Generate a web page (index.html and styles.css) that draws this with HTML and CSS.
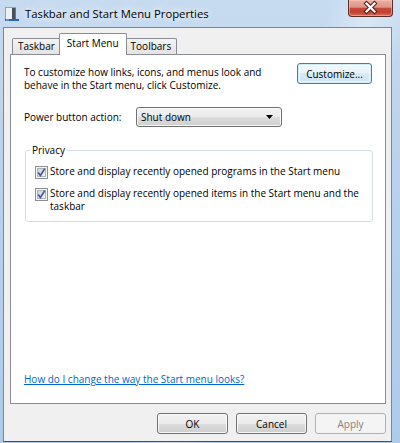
FILE: index.html
```html
<!DOCTYPE html>
<html>
<head>
<meta charset="utf-8">
<link rel="stylesheet" href="styles.css">
</head>
<body>
<div class="window">
  <div class="titlebar">
    <svg class="app-icon" width="14" height="15" viewBox="0 0 14 15">
      <rect x="0.5" y="0.5" width="10" height="12" fill="#eef0f2" stroke="#9aa0a8"/>
      <rect x="7" y="1" width="3.5" height="11.5" fill="#4a5058"/>
      <rect x="0" y="12" width="14" height="2" fill="#2d62b0"/>
      <rect x="1" y="12.5" width="3" height="1" fill="#8fc0f0"/>
    </svg>
    <span class="title">Taskbar and Start Menu Properties</span>
    <div class="close">
      <svg width="43" height="16" viewBox="0 0 43 16">
        <path d="M17.5 3.5 L25.5 11.5 M25.5 3.5 L17.5 11.5" stroke="#4a1f1a" stroke-width="4.2" stroke-linecap="square" fill="none"/>
        <path d="M17.5 3.5 L25.5 11.5 M25.5 3.5 L17.5 11.5" stroke="#ffffff" stroke-width="2.2" stroke-linecap="square" fill="none"/>
      </svg>
    </div>
  </div>
  <div class="client">
    <div class="tabs">
      <div class="tab">Taskbar</div>
      <div class="tab active">Start Menu</div>
      <div class="tab">Toolbars</div>
    </div>
    <div class="panel">
      <div class="intro">
        <p class="intro-text">To customize how links, icons, and menus look and<br>behave in the Start menu, click Customize.</p>
        <button class="btn btn-focus">Customize...</button>
      </div>
      <div class="power">
        <span class="power-label">Power button action:</span>
        <div class="select">
          <span>Shut down</span>
          <svg class="select-arrow" width="7" height="4" viewBox="0 0 7 4"><path d="M0 0 H7 L3.5 4 Z" fill="#000"/></svg>
        </div>
      </div>
      <fieldset class="group">
        <legend>Privacy</legend>
        <div class="check">
          <svg class="box" width="13" height="13" viewBox="0 0 13 13">
            <defs><linearGradient id="cbg" x1="0" y1="0" x2="1" y2="1"><stop offset="0" stop-color="#c9ced4"/><stop offset="1" stop-color="#f7f8f9"/></linearGradient></defs>
            <rect x="0.5" y="0.5" width="12" height="12" fill="#f6f6f6" stroke="#8e8f8f"/>
            <rect x="2.5" y="2.5" width="8" height="8" fill="url(#cbg)" stroke="#b0b5bb"/>
            <path d="M3.2 6.4 L5.4 9.4 L9.8 2.6" fill="none" stroke="#3f5a96" stroke-width="1.7"/>
          </svg>
          <span>Store and display recently opened programs in the Start menu</span>
        </div>
        <div class="check">
          <svg class="box" width="13" height="13" viewBox="0 0 13 13">
            <rect x="0.5" y="0.5" width="12" height="12" fill="#f6f6f6" stroke="#8e8f8f"/>
            <rect x="2.5" y="2.5" width="8" height="8" fill="url(#cbg)" stroke="#b0b5bb"/>
            <path d="M3.2 6.4 L5.4 9.4 L9.8 2.6" fill="none" stroke="#3f5a96" stroke-width="1.7"/>
          </svg>
          <span>Store and display recently opened items in the Start menu and the<br>taskbar</span>
        </div>
      </fieldset>
      <a class="help" href="#">How do I change the way the Start menu looks?</a>
    </div>
    <div class="buttons">
      <button class="btn">OK</button>
      <button class="btn">Cancel</button>
      <button class="btn btn-disabled">Apply</button>
    </div>
  </div>
</div>
</body>
</html>
```
FILE: styles.css
```css
* { box-sizing: border-box; }
html, body { margin: 0; padding: 0; }
body {
  width: 400px;
  height: 443px;
  overflow: hidden;
  font-family: "Open Sans", "Noto Sans", sans-serif;
  font-size: 10px;
  color: #000;
}
.window {
  width: 400px;
  height: 443px;
  display: flex;
  flex-direction: column;
  padding: 0 7px 1px 3px;
  background:
    linear-gradient(115deg, rgba(255,255,255,0) 55%, rgba(255,255,255,0.35) 62%, rgba(255,255,255,0) 70%),
    linear-gradient(180deg, #c7dbf0 0%, #bcd3ec 30%, #aecbea 100%);
}
.titlebar {
  height: 27px;
  display: flex;
  align-items: flex-start;
  flex-shrink: 0;
}
.app-icon { margin: 7px 0 0 2px; }
.title {
  margin: 6px 0 0 6px;
  font-size: 11.3px;
  line-height: 15px;
  text-shadow: 0 0 6px #fff, 0 0 10px rgba(255,255,255,0.9);
}
.close {
  margin-left: auto;
  width: 45px;
  height: 17px;
  border: 1px solid #5b2b26;
  border-top: none;
  border-radius: 0 0 4px 4px;
  background: linear-gradient(180deg, #eab0a3 0%, #dc9486 45%, #c64a3b 52%, #c2402f 75%, #d76a57 100%);
  box-shadow: inset 0 0 0 1px rgba(255,200,190,0.5);
}
.close svg { display: block; }
.client {
  flex: 1;
  display: flex;
  flex-direction: column;
  margin-right: 1px;
  background: #f0f0f0;
  border: 1px solid #7486a0;
  border-bottom-color: #4a4f56;
  padding: 5px 5px 7px 6px;
}
.tabs {
  display: flex;
  align-items: flex-end;
  height: 21px;
  padding-left: 2px;
  flex-shrink: 0;
}
.tab {
  height: 16px;
  padding: 0 5px;
  border: 1px solid #898c95;
  border-bottom: none;
  background: linear-gradient(180deg, #f4f4f4, #e3e3e3);
  line-height: 14px;
  border-radius: 2px 2px 0 0;
}
.tab.active {
  position: relative;
  z-index: 1;
  height: 22px;
  margin: 0 -2px -1px;
  padding: 0 7px;
  background: #fff;
  line-height: 18px;
}
.panel {
  flex: 1;
  display: flex;
  flex-direction: column;
  border: 1px solid #898c95;
  background: #fff;
  padding: 8px 13px 17px 13px;
}
.intro {
  display: flex;
  justify-content: space-between;
  align-items: flex-start;
}
.intro-text {
  margin: 3px 0 0;
  line-height: 13px;
}
.btn {
  font: inherit;
  color: #000;
  width: 71px;
  height: 21px;
  padding: 0;
  border: 1px solid #707070;
  border-radius: 3px;
  background: linear-gradient(180deg, #f2f2f2 0%, #ebebeb 50%, #dddddd 50%, #cfcfcf 100%);
  box-shadow: inset 0 0 0 1px rgba(255,255,255,0.8);
}
.btn-focus {
  width: 75px;
  border-color: #3c7fb1;
  background: linear-gradient(180deg, #f3f9fc 0%, #e8f2f8 50%, #d6e9f4 50%, #cfe4f1 100%);
  box-shadow: inset 0 0 0 1px #d0ecfa, inset 0 0 0 2px rgba(255,255,255,0.6);
}
.btn-disabled {
  color: #838383;
  border-color: #adb2b5;
  background: #f4f4f4;
  box-shadow: none;
}
.power {
  display: flex;
  align-items: center;
  margin-top: 15px;
}
.power-label { width: 112px; }
.select {
  width: 146px;
  height: 20px;
  display: flex;
  align-items: center;
  justify-content: space-between;
  padding: 0 8px 0 4px;
  border: 1px solid #707070;
  border-radius: 3px;
  background: linear-gradient(180deg, #f2f2f2 0%, #ebebeb 50%, #dddddd 50%, #cfcfcf 100%);
  box-shadow: inset 0 0 0 1px rgba(255,255,255,0.8);
}
.group {
  margin: 17px -1px 0 1px;
  padding: 8px 9px 8px 9px;
  border: 1px solid #d5dfe5;
  border-radius: 3px;
  display: flex;
  flex-direction: column;
  gap: 8px;
}
.group legend {
  margin-left: -5px;
  padding: 0 2px;
  line-height: 13px;
}
.check {
  display: flex;
  align-items: flex-start;
  line-height: 13px;
}
.check .box {
  flex-shrink: 0;
  margin: 1px 2px 0 0;
}
.help {
  margin-top: auto;
  color: #0066cc;
  line-height: 13px;
  align-self: flex-start;
}
.buttons {
  display: flex;
  justify-content: flex-end;
  gap: 8px;
  margin-top: 9px;
  flex-shrink: 0;
}
```
